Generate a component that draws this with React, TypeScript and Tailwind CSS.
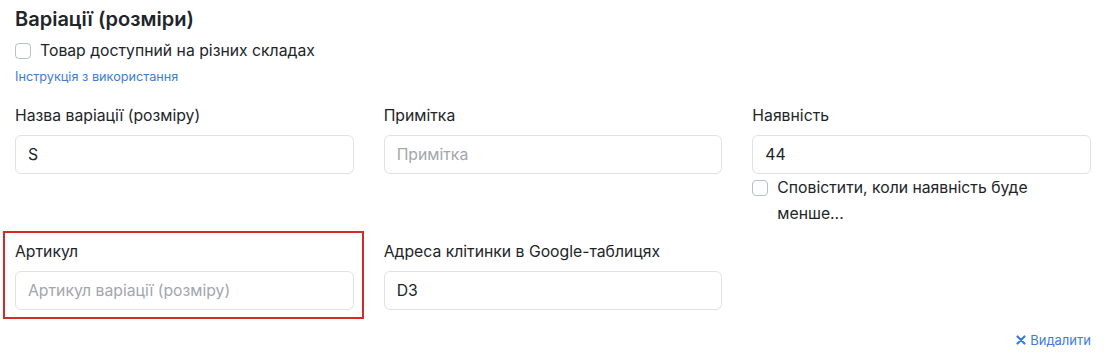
import React from "react";

const font = { fontFamily: "Inter, 'Noto Sans', sans-serif" };

function Field({ label, value, placeholder }: { label: string; value?: string; placeholder?: string }) {
  return (
    <div>
      <div className="text-[15.75px] leading-[22px] text-[#212529] mb-[8px]">{label}</div>
      <input
        readOnly
        value={value ?? ""}
        placeholder={placeholder}
        className="block w-full h-[39px] px-[12px] text-[15.75px] text-[#212529] placeholder:text-[#a3a6ab] border border-[#dee2e6] rounded-[6px] bg-white outline-none"
        style={font}
      />
    </div>
  );
}

function Check({ label }: { label: string }) {
  return (
    <label className="flex items-start gap-[9px] text-[15.75px] leading-[26px] text-[#212529]">
      <span className="mt-[5px] shrink-0 w-[16px] h-[16px] border border-[#b9bec4] rounded-[4px] bg-white" />
      <span>{label}</span>
    </label>
  );
}

export default function App() {
  return (
    <div className="bg-white w-[1106px] h-[360px] px-[15px] pt-[6px]" style={font}>
      <h2 className="text-[20px] leading-[26px] font-semibold text-[#212529]">Варіації (розміри)</h2>
      <div className="mt-[6px]">
        <Check label="Товар доступний на різних складах" />
      </div>
      <a className="block text-[12.7px] leading-[18px] text-[#3b7ddd] mt-[4px]">Інструкція з використання</a>
      <div className="grid grid-cols-3 gap-x-[30px] mt-[19px]">
        <Field label="Назва варіації (розміру)" value="S" />
        <Field label="Примітка" placeholder="Примітка" />
        <div>
          <Field label="Наявність" value="44" />
          <div className="mt-[1px]">
            <Check label="Сповістити, коли наявність буде менше..." />
          </div>
        </div>
        <div className="relative mt-[14px]">
          <div className="absolute left-[-12px] right-[-10px] top-[-10px] bottom-[-9px] border-2 border-[#d42a2a] pointer-events-none" />
          <Field label="Артикул" placeholder="Артикул варіації (розміру)" />
        </div>
        <div className="mt-[14px]">
          <Field label="Адреса клітинки в Google-таблицях" value="D3" />
        </div>
        <div />
      </div>
      <div className="flex justify-end mt-[21px]">
        <a className="flex items-center gap-[4px] text-[13px] leading-[18px] text-[#3b7ddd]">
          <svg width="10" height="10" viewBox="0 0 10 10">
            <path d="M1.5 1.5 L8.5 8.5 M8.5 1.5 L1.5 8.5" stroke="#3b7ddd" strokeWidth="2.2" strokeLinecap="round" />
          </svg>
          Видалити
        </a>
      </div>
    </div>
  );
}
